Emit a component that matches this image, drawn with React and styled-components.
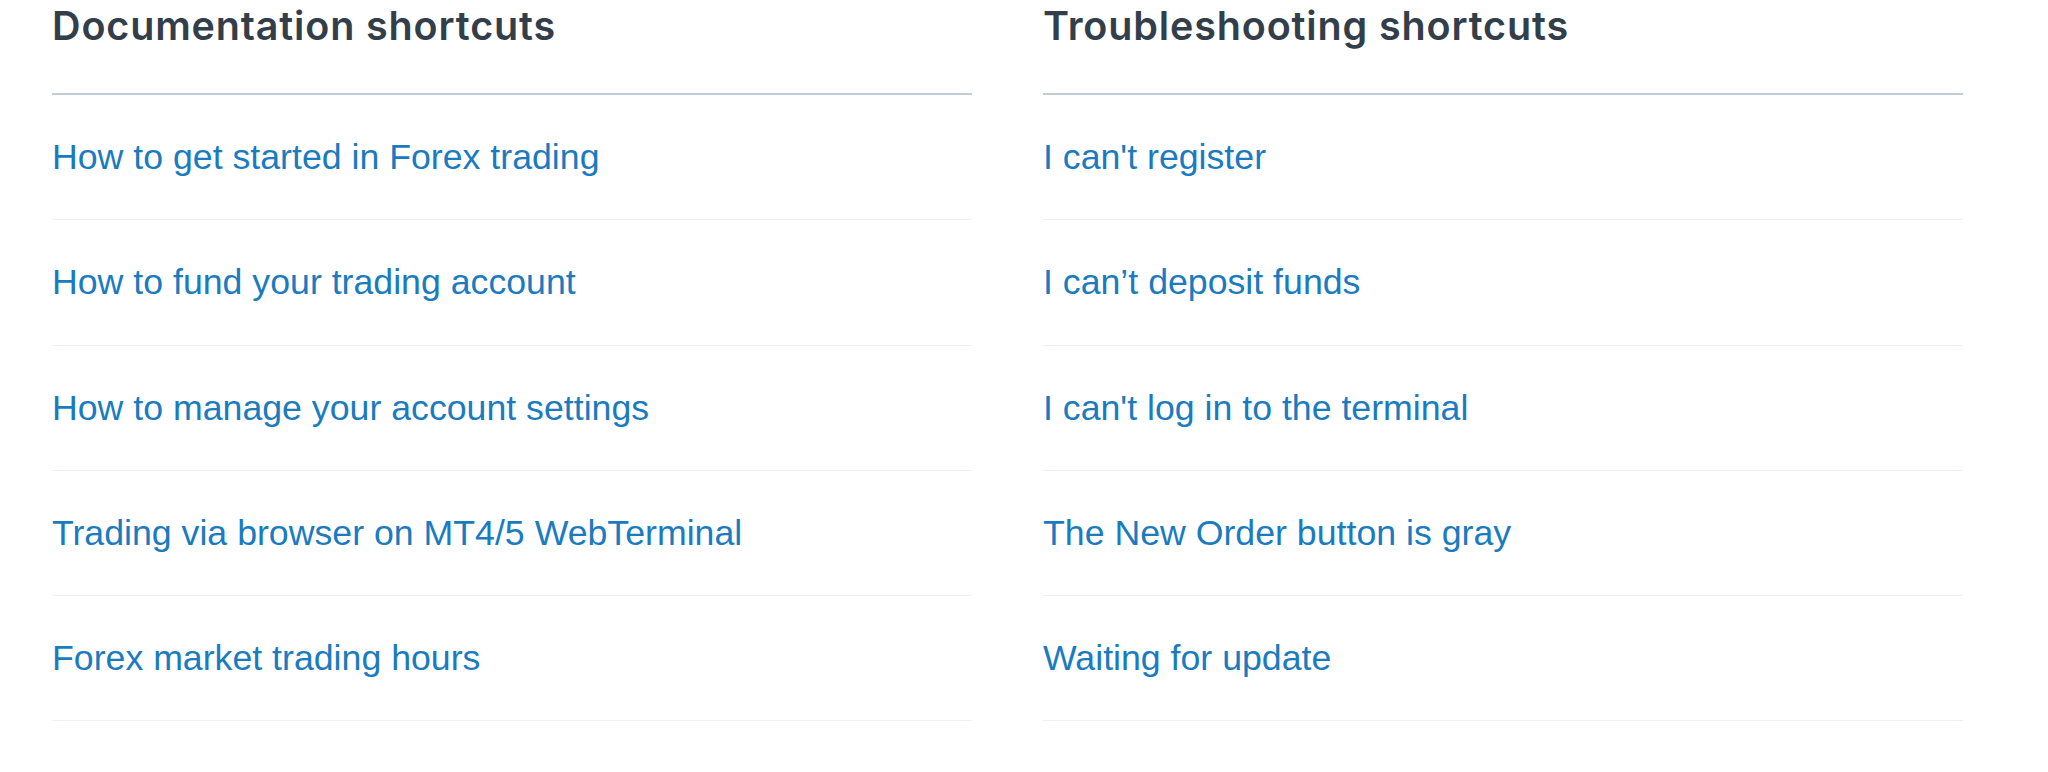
import React from "react";
import styled, { createGlobalStyle } from "styled-components";

const Global = createGlobalStyle`
  html, body { margin: 0; padding: 0; background: #ffffff; }
  body { font-family: "Liberation Sans", Arial, sans-serif; -webkit-font-smoothing: antialiased; }
`;

const Page = styled.div`
  display: grid;
  grid-template-columns: 920px 920px;
  column-gap: 71px;
  padding: 3px 0 0 52px;
`;

const Column = styled.section`
  display: flex;
  flex-direction: column;
`;

const Title = styled.h2`
  margin: 0;
  font-family: Inter, "Liberation Sans", Arial, sans-serif;
  font-size: 39.5px;
  line-height: 47px;
  font-weight: 600;
  letter-spacing: 0.85px;
  color: #333e4b;
  padding-bottom: 43px;
  border-bottom: 2px solid #bfccd7;
`;

const List = styled.ul`
  list-style: none;
  margin: 0;
  padding: 0;
`;

const Item = styled.li`
  border-bottom: 1px solid #edf1f5;
  padding: 35px 0 35.3px;
`;

const Link = styled.a`
  display: block;
  font-size: 35.7px;
  line-height: 54px;
  color: #1b7bbf;
  text-decoration: none;
`;

const columns = [
  {
    title: "Documentation shortcuts",
    links: [
      "How to get started in Forex trading",
      "How to fund your trading account",
      "How to manage your account settings",
      "Trading via browser on MT4/5 WebTerminal",
      "Forex market trading hours",
    ],
  },
  {
    title: "Troubleshooting shortcuts",
    links: [
      "I can't register",
      "I can\u2019t deposit funds",
      "I can't log in to the terminal",
      "The New Order button is gray",
      "Waiting for update",
    ],
  },
];

export default function App() {
  return (
    <>
      <Global />
      <Page>
        {columns.map((col) => (
          <Column key={col.title}>
            <Title>{col.title}</Title>
            <List>
              {col.links.map((l) => (
                <Item key={l}>
                  <Link href="#">{l}</Link>
                </Item>
              ))}
            </List>
          </Column>
        ))}
      </Page>
    </>
  );
}
